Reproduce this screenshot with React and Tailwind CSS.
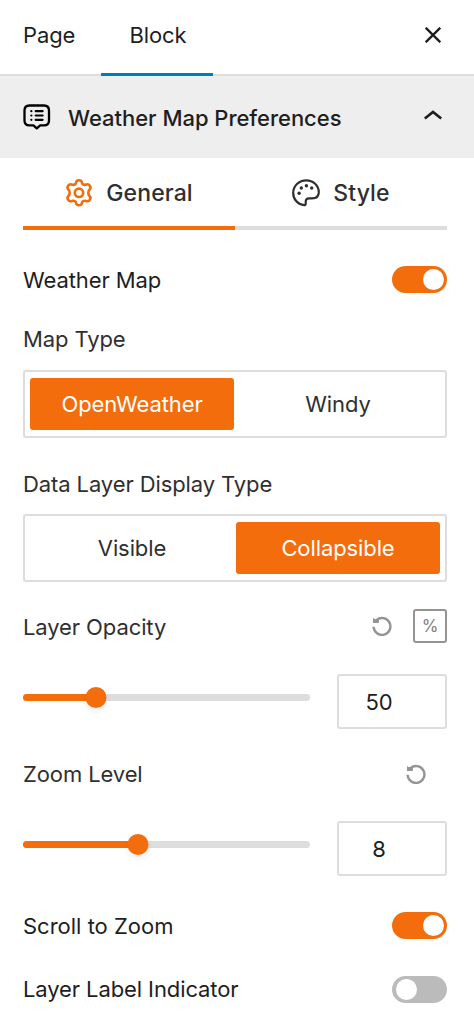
import React, { useState } from "react";

const GearIcon = () => (
  <svg width="28" height="28" viewBox="0 0 28 28" fill="none" stroke="#f26c0d" strokeWidth="2.6" strokeLinejoin="round">
    <path d="M11 3.7 Q11.4 1.3 14 1.3 Q16.6 1.3 17 3.7 L17.2 4.7 Q18.6 6.2 20.4 5.8 L21.6 5.4 Q23.8 4.9 25 7 Q26.2 9.1 24.6 10.6 L23.8 11.4 Q22.9 13.8 23.8 16.2 L24.6 17 Q26.2 18.5 25 20.6 Q23.8 22.7 21.6 22.2 L20.4 21.8 Q18.6 21.4 17.2 22.9 L17 23.9 Q16.6 26.3 14 26.3 Q11.4 26.3 11 23.9 L10.8 22.9 Q9.4 21.4 7.6 21.8 L6.4 22.2 Q4.2 22.7 3 20.6 Q1.8 18.5 3.4 17 L4.2 16.2 Q5.1 13.8 4.2 11.4 L3.4 10.6 Q1.8 9.1 3 7 Q4.2 4.9 6.4 5.4 L7.6 5.8 Q9.4 6.2 10.8 4.7 Z" />
    <circle cx="14" cy="13.8" r="4.2" />
  </svg>
);

const PaletteIcon = () => (
  <svg width="28" height="28" viewBox="0 0 28 28" fill="none">
    <path
      d="M12.2 26.2 C6 25.6 1.2 20.6 1.2 14 C1.2 7 6.9 1.3 14.2 1.3 C21.2 1.3 26.8 6.6 26.8 13.2 C26.8 17.2 24 19.4 20 19.4 H17 C14.6 19.4 13.7 20.8 13.7 22.8 V24.8 C13.7 25.8 13.1 26.3 12.2 26.2 Z"
      stroke="#2f2f2f"
      strokeWidth="2.2"
      strokeLinejoin="round"
    />
    <g fill="#2f2f2f">
      <circle cx="7.1" cy="14.3" r="1.7" />
      <circle cx="9.3" cy="9" r="1.7" />
      <circle cx="14.4" cy="6.8" r="1.7" />
      <circle cx="19.7" cy="9" r="1.7" />
    </g>
  </svg>
);

const PanelIcon = () => (
  <svg width="28" height="26" viewBox="0 0 28 26" fill="none" stroke="#000" strokeLinejoin="round" strokeLinecap="round">
    <path d="M6.5 1.5 H21 Q26 1.5 26 6.5 V16.5 Q26 21.4 21 21.4 H17.2 L13.8 24.4 L10.4 21.4 H6.5 Q1.5 21.4 1.5 16.5 V6.5 Q1.5 1.5 6.5 1.5 Z" strokeWidth="2.3" />
    <path d="M12.7 7.2 H19.6 M12.7 11.5 H19.6 M12.7 15.8 H19.6 M8.3 7.2 H8.4 M8.3 11.5 H8.4 M8.3 15.8 H8.4" strokeWidth="2.2" />
  </svg>
);

const ResetIcon = () => (
  <svg width="20" height="20" viewBox="0 0 20 20" fill="none" stroke="#949494" strokeWidth="2.4">
    <path d="M1.6 10.8 A8.4 8.4 0 1 0 4.4 4.2" />
    <path d="M1 2 L2.6 3 L7 3.2 L6.8 7 H1 Z" fill="#949494" stroke="none" />
  </svg>
);

const Toggle = ({ checked, onChange }) => (
  <button
    role="switch"
    aria-checked={checked}
    onClick={() => onChange(!checked)}
    className={`flex h-[27px] w-[55px] items-center rounded-full px-[3.5px] ${
      checked ? "justify-end bg-[#f36d0c]" : "justify-start bg-[#bbbbbb]"
    }`}
  >
    <span className="size-[21px] rounded-full bg-white" />
  </button>
);

const ButtonGroup = ({ options, value, onChange }) => (
  <div className="flex h-[68px] gap-[2px] rounded-[3px] border-2 border-[#dddddd] px-[5px] py-[6px]">
    {options.map((option) => (
      <button
        key={option}
        onClick={() => onChange(option)}
        className={`flex-1 rounded-[3px] ${
          option === value ? "bg-[#f36d0c] text-white" : "text-[#2f2f2f]"
        }`}
      >
        {option}
      </button>
    ))}
  </div>
);

const RangeControl = ({ value, percent }) => (
  <div className="flex justify-between">
    <div className="relative mt-[20px] h-[7px] w-[287px] rounded-full bg-[#dddddd]">
      <div className="h-full rounded-full bg-[#f36d0c]" style={{ width: `${percent}%` }} />
      <span
        className="absolute -top-[7px] size-[21px] -translate-x-1/2 rounded-full bg-[#f36d0c] shadow-[0_3px_6px_rgba(0,0,0,0.08)]"
        style={{ left: `${percent}%` }}
      />
    </div>
    <div className="flex h-[55px] w-[110px] items-center rounded-[3px] border-2 border-[#dddddd] pr-[26px] text-[#1e1e1e]">
      <span className="w-full pt-px text-center">{value}</span>
    </div>
  </div>
);

const App = () => {
  const [weatherMap, setWeatherMap] = useState(true);
  const [mapType, setMapType] = useState("OpenWeather");
  const [displayType, setDisplayType] = useState("Collapsible");
  const [scrollZoom, setScrollZoom] = useState(true);
  const [labelIndicator, setLabelIndicator] = useState(false);

  return (
    <div className="h-[1024px] w-[474px] overflow-hidden bg-white font-['Inter',sans-serif] text-[22px] leading-[30px] font-[430] tracking-[-0.1px] text-[#2f2f2f]">
      {/* Sidebar tabs */}
      <div className="flex h-[76px] border-b-2 border-[#dddddd] text-[#1e1e1e]">
        <button className="h-[70px] w-[101px] pl-[23px] text-left">Page</button>
        <button className="-mb-[2px] h-[76px] w-[112px] border-b-3 border-[#007cba] pb-[3px] pl-[2px]">
          Block
        </button>
        <button className="ml-auto mr-[33px] flex h-[70px] items-center">
          <svg width="16" height="16" viewBox="0 0 16 16" stroke="#1e1e1e" strokeWidth="2.3">
            <path d="M0.7 0.7 L15.3 15.3 M15.3 0.7 L0.7 15.3" />
          </svg>
        </button>
      </div>

      {/* Panel title */}
      <div className="flex h-[82px] items-center bg-[#eeeeee] pl-[23px] pr-[32px]">
        <PanelIcon />
        <span className="ml-[17px] pt-px font-medium tracking-[-0.03px] text-[#1e1e1e]">Weather Map Preferences</span>
        <svg className="mb-[4px] ml-auto" width="18" height="10" viewBox="0 0 18 10" fill="none" stroke="#1e1e1e" strokeWidth="2.6">
          <path d="M0.8 8.5 L9 2 L17.2 8.5" />
        </svg>
      </div>

      <div className="pl-[23px] pr-[27px]">
        {/* General / Style */}
        <div className="flex h-[72px] text-[23px] font-medium tracking-[0.1px]">
          <button className="flex w-[212px] items-center justify-center gap-[13px] border-b-4 border-[#f36d0c] pt-[2px]">
            <GearIcon />
            General
          </button>
          <button className="flex w-[212px] items-center justify-center gap-[13px] border-b-4 border-[#dddddd] pt-[2px]">
            <PaletteIcon />
            Style
          </button>
        </div>

        <div className="mt-[34px] flex h-[30px] items-center justify-between text-[#1e1e1e]">
          <span className="pt-px">Weather Map</span>
          <Toggle checked={weatherMap} onChange={setWeatherMap} />
        </div>

        <div className="mt-[30px] mb-[16px]">Map Type</div>
        <ButtonGroup options={["OpenWeather", "Windy"]} value={mapType} onChange={setMapType} />

        <div className="mt-[31px] mb-[15px]">Data Layer Display Type</div>
        <ButtonGroup options={["Visible", "Collapsible"]} value={displayType} onChange={setDisplayType} />

        <div className="mt-[27px] mb-[31px] flex h-[34px] items-center">
          <span className="pt-[2px]">Layer Opacity</span>
          <span className="ml-auto mr-[21px]">
            <ResetIcon />
          </span>
          <span className="flex size-[34px] items-center justify-center rounded-[3px] border-2 border-[#949494] text-[17px] text-[#808080]">
            %
          </span>
        </div>
        <RangeControl value={50} percent={25.3} />

        <div className="mt-[30px] mb-[32px] flex h-[30px] items-center justify-between">
          Zoom Level
          <span className="mr-[21px]">
            <ResetIcon />
          </span>
        </div>
        <RangeControl value={8} percent={40.2} />

        <div className="mt-[34px] flex h-[30px] items-center justify-between text-[#1e1e1e]">
          <span className="pt-px tracking-normal">Scroll to Zoom</span>
          <Toggle checked={scrollZoom} onChange={setScrollZoom} />
        </div>
        <div className="mt-[34px] flex h-[30px] items-center justify-between text-[#1e1e1e]">
          <span>Layer Label Indicator</span>
          <Toggle checked={labelIndicator} onChange={setLabelIndicator} />
        </div>
      </div>
    </div>
  );
};

export default App;
